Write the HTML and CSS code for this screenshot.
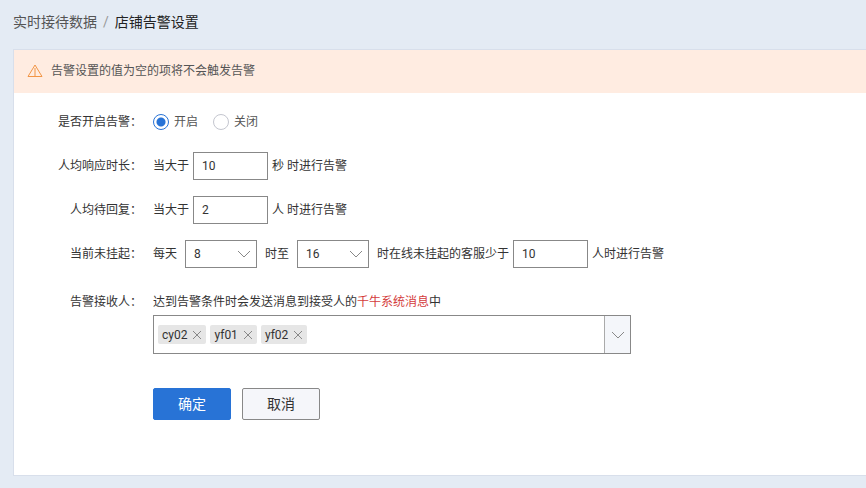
FILE: index.html
```html
<!DOCTYPE html>
<html lang="zh-CN">
<head>
  <meta charset="utf-8">
  <title>店铺告警设置</title>
  <link rel="stylesheet" href="styles.css">
</head>
<body>
  <nav class="breadcrumb">
    <a href="#">实时接待数据</a>
    <span class="separator">/</span>
    <span class="current">店铺告警设置</span>
  </nav>

  <main class="panel">
    <div class="notice">
      <svg class="notice-icon" viewBox="0 0 16 14" width="16" height="14">
        <path d="M8 1 L15 12.5 H1 Z M8 4 V12" />
      </svg>
      <span>告警设置的值为空的项将不会触发告警</span>
    </div>

    <form class="form">
      <div class="row">
        <span class="label">是否开启告警：</span>
        <div class="content radios">
          <label class="radio"><input type="radio" name="enabled" checked>开启</label>
          <label class="radio"><input type="radio" name="enabled">关闭</label>
        </div>
      </div>

      <div class="row">
        <label class="label" for="response">人均响应时长：</label>
        <div class="content">
          <span>当大于</span>
          <input class="number" id="response" type="text" value="10">
          <span>秒 时进行告警</span>
        </div>
      </div>

      <div class="row">
        <label class="label" for="waiting">人均待回复：</label>
        <div class="content">
          <span>当大于</span>
          <input class="number" id="waiting" type="text" value="2">
          <span>人 时进行告警</span>
        </div>
      </div>

      <div class="row">
        <label class="label" for="online">当前未挂起：</label>
        <div class="content">
          <span>每天</span>
          <div class="select">
            <select aria-label="开始时间"><option>8</option></select>
            <svg class="arrow" viewBox="0 0 14 8" width="14" height="8"><path d="M1 1 L7 7 L13 1" /></svg>
          </div>
          <span>时至</span>
          <div class="select">
            <select aria-label="结束时间"><option>16</option></select>
            <svg class="arrow" viewBox="0 0 14 8" width="14" height="8"><path d="M1 1 L7 7 L13 1" /></svg>
          </div>
          <span>时在线未挂起的客服少于</span>
          <input class="number" id="online" type="text" value="10">
          <span>人时进行告警</span>
        </div>
      </div>

      <div class="row receivers">
        <span class="label">告警接收人：</span>
        <div class="field">
          <p class="hint">达到告警条件时会发送消息到接受人的<span class="highlight">千牛系统消息</span>中</p>
          <div class="tag-box">
            <div class="tags">
              <span class="tag">cy02<button type="button" class="remove" aria-label="删除 cy02"><svg viewBox="0 0 10 10" width="10" height="10"><path d="M1 1 L9 9 M9 1 L1 9" /></svg></button></span>
              <span class="tag">yf01<button type="button" class="remove" aria-label="删除 yf01"><svg viewBox="0 0 10 10" width="10" height="10"><path d="M1 1 L9 9 M9 1 L1 9" /></svg></button></span>
              <span class="tag">yf02<button type="button" class="remove" aria-label="删除 yf02"><svg viewBox="0 0 10 10" width="10" height="10"><path d="M1 1 L9 9 M9 1 L1 9" /></svg></button></span>
            </div>
            <button type="button" class="toggle" aria-label="展开">
              <svg viewBox="0 0 14 8" width="14" height="8"><path d="M1 1 L7 7 L13 1" /></svg>
            </button>
          </div>
        </div>
      </div>

      <div class="actions">
        <button type="submit" class="btn primary">确定</button>
        <button type="button" class="btn">取消</button>
      </div>
    </form>
  </main>
</body>
</html>
```

FILE: styles.css
```css
* {
  box-sizing: border-box;
}

body {
  display: flex;
  flex-direction: column;
  min-height: 100vh;
  margin: 0;
  padding: 0 0 12px 13px;
  background-color: #e4ebf4;
  color: #333;
  font: 12px/20px Roboto, "Noto Sans CJK SC", sans-serif;
}

input,
select,
button {
  margin: 0;
  font: inherit;
  color: inherit;
}

svg {
  display: block;
  fill: none;
  stroke: #888;
}

.breadcrumb {
  display: flex;
  gap: 6px;
  padding: 12px 0 17px;
  font-size: 14px;
}

.breadcrumb a {
  color: #555;
  text-decoration: none;
}

.separator {
  color: #999;
}

.current {
  color: #222;
}

.panel {
  flex: 1;
  border: 1px solid #d8dfeb;
  border-right: 0;
  background-color: #fff;
}

.notice {
  display: flex;
  align-items: center;
  gap: 8px;
  padding: 11px 13px 12px;
  background-color: #ffece1;
  color: #555;
}

.notice-icon {
  stroke: #f29545;
  stroke-linejoin: round;
}

.form {
  display: flex;
  flex-direction: column;
  gap: 16px;
  padding: 15px 0 50px 32px;
}

.row {
  display: flex;
  align-items: center;
  gap: 11px;
  min-height: 28px;
}

.label {
  flex: none;
  width: 96px;
  text-align: right;
}

.content {
  display: flex;
  align-items: center;
  gap: 4px;
  white-space: nowrap;
}

.radios {
  gap: 15px;
}

.radio {
  display: flex;
  align-items: center;
  gap: 5px;
  color: #555;
}

.radio input {
  appearance: none;
  width: 16px;
  height: 16px;
  border: 1px solid #c4c6cf;
  border-radius: 50%;
  background-color: #fff;
}

.radio input:checked {
  border-color: #2873d6;
  background: radial-gradient(circle, #2873d6 4px, #fff 5px);
}

.number {
  width: 75px;
  height: 28px;
  padding: 0 8px;
  border: 1px solid #888;
  background-color: #fff;
}

.select {
  position: relative;
  width: 72px;
  margin: 0 4px;
}

.select select {
  display: block;
  appearance: none;
  width: 100%;
  height: 28px;
  padding: 0 8px;
  border: 1px solid #888;
  border-radius: 0;
  background-color: #fff;
}

.arrow {
  position: absolute;
  top: 10px;
  right: 6px;
  pointer-events: none;
}

.receivers {
  align-items: flex-start;
  padding-top: 8px;
}

.field {
  flex: 0 1 478px;
}

.hint {
  margin: 0 0 3px;
}

.highlight {
  color: #d43c3c;
}

.tag-box {
  display: flex;
  min-height: 39px;
  border: 1px solid #888;
}

.tags {
  display: flex;
  flex: 1;
  align-items: center;
  gap: 4px;
  padding: 0 4px;
}

.tag {
  display: flex;
  align-items: center;
  gap: 5px;
  height: 19px;
  padding: 0 4px;
  border-radius: 2px;
  background-color: #e6e6e6;
}

.remove {
  padding: 0;
  border: 0;
  background: none;
}

.toggle {
  display: flex;
  align-items: center;
  justify-content: center;
  width: 26px;
  padding: 0;
  border: 0;
  border-left: 1px solid #aaa;
  background-color: #f4f6fa;
}

.actions {
  display: flex;
  gap: 11px;
  padding: 18px 0 0 107px;
}

.btn {
  width: 78px;
  height: 32px;
  padding: 0;
  border: 1px solid #888;
  border-radius: 2px;
  background-color: #f5f6fa;
  font-size: 14px;
}

.primary {
  border-color: #2873d6;
  background-color: #2873d6;
  color: #fff;
}
```
